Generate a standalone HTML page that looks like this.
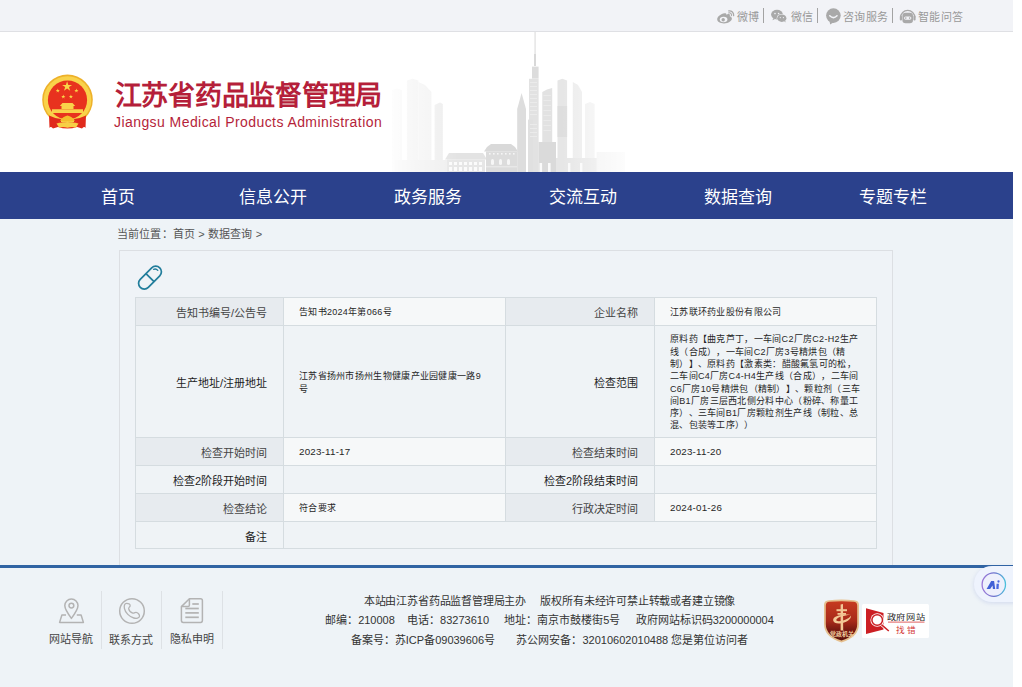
<!DOCTYPE html>
<html lang="zh-CN"><head><meta charset="utf-8">
<style>
html,body{margin:0;padding:0;background:#fff;}
body{text-spacing-trim:space-all;width:1022px;height:687px;overflow:hidden;position:relative;font-family:"Liberation Sans",sans-serif;color:#333;}
.abs{position:absolute;}
#page{position:absolute;left:0;top:0;width:1013px;height:687px;background:#eef3f7;overflow:hidden;}
#topbar{position:absolute;left:0;top:0;width:1013px;height:31px;background:#f2f3f7;border-bottom:1px solid #dfe0e4;}
#topbar .t{position:absolute;top:9px;font-size:11px;letter-spacing:0.45px;line-height:16px;color:#999;white-space:nowrap;}
#topbar .sep{position:absolute;top:8px;width:1px;height:15px;background:#a3a3a3;}
#header{position:absolute;left:0;top:32px;width:1013px;height:140px;background:#fff;}
#nav{position:absolute;left:0;top:172px;width:1013px;height:47px;background:#2b418c;}
#nav .i{position:absolute;top:2px;width:155px;text-align:center;font-size:17px;font-weight:500;line-height:47px;color:#fff;white-space:nowrap;}
#crumb{position:absolute;left:117px;top:226px;font-size:11px;letter-spacing:0.15px;line-height:16px;color:#555;white-space:nowrap;}
#box{position:absolute;left:119px;top:250px;width:772px;height:315px;border:1px solid #dcdfe3;border-bottom:none;background:#eff3f7;}
table{position:absolute;left:135px;top:297px;border-collapse:collapse;table-layout:fixed;}
td{border:1px solid #d5dce0;padding:0;font-size:11px;color:#333;}
td.v{color:#262626;}
td.l{text-align:right;padding-right:16px;padding-top:1px;}
td.v{padding-left:15px;padding-top:2px;font-size:9px;letter-spacing:0.3px;line-height:12.33px;}
td.d{font-size:9.8px;letter-spacing:0.2px;}
tr.o td.l{background:#e7ebef;color:#444;}
tr.e td.l{color:#1c1c1c;}
tr.o td.v{background:#f6f8f9;}
tr.e td{background:#eff3f6;}
#fline{position:absolute;left:0;top:565px;width:1013px;height:3px;background:#3064a3;}
.fi{position:absolute;top:632px;font-size:11px;line-height:14px;color:#444;white-space:nowrap;}
.fsep{position:absolute;top:591px;width:1px;height:58px;background:#dde1e5;}
.ft{position:absolute;left:0;width:1099px;text-align:center;font-size:11px;line-height:16px;color:#333;white-space:nowrap;}
</style></head>
<body>
<div id="page">
  <div id="topbar">
    <svg class="abs" style="left:700px;top:0" width="230" height="31" viewBox="700 0 230 31">
      <g fill="#a9a9a9">
        <!-- weibo -->
        <path d="M724.5,13.2 C721,13.6 717.2,16.6 717.2,19.3 C717.2,21.9 720.3,23.4 724,23.4 C728.6,23.4 731.9,21 731.9,18.6 C731.9,17.2 730.6,16.5 729.7,16.3 C730.2,15.2 730.1,14.2 728.9,14 C728,13.9 726.9,14.5 726.3,14.8 C726.6,13.6 726.1,13 724.5,13.2 Z"/>
        <ellipse cx="723.6" cy="19.5" rx="3.8" ry="2.7" fill="#f2f3f7"/>
        <circle cx="723.2" cy="19.7" r="1.7"/>
        <path d="M728.8,10.9 A4.2,4.2 0 0 1 733.6,15.6" stroke="#a9a9a9" stroke-width="1.4" fill="none" stroke-linecap="round"/>
        <path d="M728.6,12.9 A2.2,2.2 0 0 1 731.4,15.6" stroke="#a9a9a9" stroke-width="1.1" fill="none" stroke-linecap="round"/>
        <!-- wechat -->
        <ellipse cx="777" cy="14.6" rx="5.9" ry="4.8"/>
        <path d="M773.5,18 L772.4,20.2 L775.6,18.8 Z"/>
        <ellipse cx="781.8" cy="18.2" rx="5.1" ry="4.1" fill="#f2f3f7"/>
        <ellipse cx="781.8" cy="18.2" rx="4.6" ry="3.7"/>
        <path d="M784,21 L785.6,22.6 L785.2,20.4 Z"/>
        <circle cx="775" cy="13.6" r="0.8" fill="#f2f3f7"/><circle cx="778.6" cy="13.6" r="0.8" fill="#f2f3f7"/>
        <circle cx="780.3" cy="17.6" r="0.6" fill="#f2f3f7"/><circle cx="783.4" cy="17.6" r="0.6" fill="#f2f3f7"/>
        <!-- consult -->
        <circle cx="833.4" cy="15.6" r="7.3"/>
        <path d="M829.5,21 L830.2,24.5 L834,22 Z"/>
        <path d="M829.8,15.8 Q833.4,19.4 837,15.8" stroke="#f2f3f7" stroke-width="1.6" fill="none" stroke-linecap="round"/>
        <!-- robot -->
        <path d="M900.6,17.5 A7.1,7.1 0 0 1 914.8,17.5" stroke="#a9a9a9" stroke-width="1.3" fill="none"/>
        <rect x="899.8" y="15.8" width="2.2" height="4.6" rx="1"/>
        <rect x="913.4" y="15.8" width="2.2" height="4.6" rx="1"/>
        <rect x="902.4" y="12.8" width="10.6" height="10.4" rx="3.2"/>
        <rect x="904" y="16.4" width="7.4" height="3.4" rx="1.7" fill="#f2f3f7"/>
        <circle cx="905.8" cy="18.1" r="0.8"/><circle cx="909.6" cy="18.1" r="0.8"/>
      </g>
    </svg>
    <div class="t" style="left:737px">微博</div>
    <div class="sep" style="left:763px"></div>
    <div class="t" style="left:791px">微信</div>
    <div class="sep" style="left:817px"></div>
    <div class="t" style="left:843px">咨询服务</div>
    <div class="sep" style="left:892px"></div>
    <div class="t" style="left:918px">智能问答</div>
  </div>
  <div id="header">
    <svg class="abs" style="left:0;top:0" width="1013" height="140" viewBox="0 32 1013 140">
      <defs>
        <linearGradient id="skyfade" x1="0" x2="1" y1="0" y2="0">
          <stop offset="0" stop-color="#fff" stop-opacity="1"/>
          <stop offset="0.12" stop-color="#fff" stop-opacity="0.55"/>
          <stop offset="0.3" stop-color="#fff" stop-opacity="0"/>
          <stop offset="0.7" stop-color="#fff" stop-opacity="0"/>
          <stop offset="0.88" stop-color="#fff" stop-opacity="0.55"/>
          <stop offset="1" stop-color="#fff" stop-opacity="1"/>
        </linearGradient>
        <linearGradient id="skyv" x1="0" x2="0" y1="0" y2="1">
          <stop offset="0" stop-color="#f2f2f2"/>
          <stop offset="1" stop-color="#dcdcdc"/>
        </linearGradient>
      </defs>
      <!-- emblem -->
      <g>
        <circle cx="67.5" cy="99.8" r="25.3" fill="#eeb12a"/>
        <circle cx="67.5" cy="100" r="23.8" fill="#f9d24a"/>
        <circle cx="67.5" cy="100" r="19.6" fill="#e8321e"/>
        <polygon fill="#f9d548" points="67.1,81.3 68.3,84.9 72.1,84.9 69.0,87.1 70.2,90.7 67.1,88.5 64.0,90.7 65.2,87.1 62.1,84.9 65.9,84.9"/>
        <polygon fill="#f9d548" points="57.8,88.5 58.3,90.0 59.9,90.0 58.6,90.9 59.1,92.4 57.8,91.5 56.5,92.4 57.0,90.9 55.7,90.0 57.3,90.0"/>
        <polygon fill="#f9d548" points="76.4,88.5 76.9,90.0 78.5,90.0 77.2,90.9 77.7,92.4 76.4,91.5 75.1,92.4 75.6,90.9 74.3,90.0 75.9,90.0"/>
        <polygon fill="#f9d548" points="63.3,94.5 63.8,96.0 65.4,96.0 64.1,96.9 64.6,98.4 63.3,97.5 62.0,98.4 62.5,96.9 61.2,96.0 62.8,96.0"/>
        <polygon fill="#f9d548" points="70.9,94.5 71.4,96.0 73.0,96.0 71.7,96.9 72.2,98.4 70.9,97.5 69.6,98.4 70.1,96.9 68.8,96.0 70.4,96.0"/>
        <path fill="#f9d24a" d="M59.8,106 L62.5,103 L72.5,103 L75.2,106 Z M61.5,106 h12 v3 h-12 Z M52,109.3 h31 v3.8 h-31 Z"/>
        <path fill="#e02a1c" d="M49,115.5 Q55,118.5 61,119 L61,126 Q57,127 53,128.5 Q50.5,126 49.5,128 Z"/>
        <path fill="#e02a1c" d="M86,115.5 Q80,118.5 74,119 L74,126 Q78,127 82,128.5 Q84.5,126 85.5,128 Z"/>
        <path fill="#e8321e" d="M58,121 Q67.5,125 77,121 L77,127 Q67.5,130 58,127 Z"/>
        <path fill="#f3bd2c" d="M60,120.5 Q63,116.5 67.5,115.5 Q72,116.5 75,120.5 Q71,122 67.5,121.3 Q64,122 60,120.5 Z"/>
        <path fill="#f7cf45" d="M56.5,123.5 Q62,122 67.5,123 Q73,122 78.5,123.5 L76,127.6 Q71.5,126.5 67.5,127.8 Q63.5,126.5 59,127.6 Z"/>
        </g>
      <!-- skyline -->
      <g>
        <polygon points="392,172 392,90 397,88.5 402,90 402,172" fill="#f3f3f3"/>
        <polygon points="406.9,172 406.9,80.5 412.6,78.8 418.3,80.5 418.3,172" fill="#efefef"/>
        <polygon points="418.3,172 418.3,82 425,85 431.4,92 431.4,172" fill="#f1f1f1"/>
        <polygon points="434.6,172 434.6,105 440,102.4 442.8,104 442.8,172" fill="#ededed"/>
        <rect x="395" y="160" width="52" height="12" fill="#eeeeee"/>
        <!-- low building -->
        <polygon points="445,159.5 449,153 483,153 487,159.5" fill="#e3e3e3"/>
        <rect x="447" y="159.5" width="38" height="12.5" fill="#e6e6e6"/>
        <g fill="#fbfbfb">
          <rect x="449" y="162" width="3" height="3"/><rect x="454" y="162" width="3" height="3"/><rect x="459" y="162" width="3" height="3"/><rect x="464" y="162" width="3" height="3"/><rect x="469" y="162" width="3" height="3"/><rect x="474" y="162" width="3" height="3"/><rect x="479" y="162" width="3" height="3"/>
          <rect x="449" y="167" width="3" height="4"/><rect x="454" y="167" width="3" height="4"/><rect x="459" y="167" width="3" height="4"/><rect x="464" y="167" width="3" height="4"/><rect x="469" y="167" width="3" height="4"/><rect x="474" y="167" width="3" height="4"/><rect x="479" y="167" width="3" height="4"/>
        </g>
        <!-- gate -->
        <polygon points="484,151.4 487,147 491,144 511,144 515,147 518,151.4" fill="#d9d9d9"/>
        <rect x="486" y="151.4" width="31" height="20.6" fill="#dcdcdc"/>
        <g fill="#f6f6f6">
          <rect x="489" y="153" width="1.6" height="1.6"/><rect x="493" y="153" width="1.6" height="1.6"/><rect x="497" y="153" width="1.6" height="1.6"/><rect x="501" y="153" width="1.6" height="1.6"/><rect x="505" y="153" width="1.6" height="1.6"/><rect x="509" y="153" width="1.6" height="1.6"/><rect x="513" y="153" width="1.6" height="1.6"/>
          <rect x="491" y="159" width="3" height="6" rx="1.5"/><rect x="499" y="159" width="3" height="6" rx="1.5"/><rect x="507" y="159" width="3" height="6" rx="1.5"/>
        </g>
        <rect x="486" y="166" width="31" height="1.4" fill="#e8e8e8"/>
        <!-- spire -->
        <polygon points="517.2,172 517.2,109 521.6,93 526,109 526,172" fill="#dddddd"/>
        <!-- zifeng tower -->
        <rect x="534.6" y="32" width="0.9" height="24" fill="#d4d4d4"/>
        <rect x="534" y="54" width="2" height="12" fill="#d8d8d8"/>
        <rect x="532" y="66.6" width="6.6" height="12" fill="#dcdcdc"/>
        <rect x="529" y="78.8" width="9.6" height="93.2" fill="#e2e2e2"/>
        <rect x="528" y="119.6" width="5" height="52.4" fill="#e0e0e0"/>
        <g fill="#f2f2f2"><rect x="530" y="82" width="7" height="0.6"/><rect x="530" y="86" width="7" height="0.6"/><rect x="530" y="90" width="7" height="0.6"/><rect x="530" y="94" width="7" height="0.6"/><rect x="530" y="98" width="7" height="0.6"/><rect x="530" y="102" width="7" height="0.6"/><rect x="530" y="106" width="7" height="0.6"/><rect x="530" y="110" width="7" height="0.6"/><rect x="530" y="114" width="7" height="0.6"/><rect x="530" y="124" width="7" height="0.6"/><rect x="530" y="128" width="7" height="0.6"/><rect x="530" y="132" width="7" height="0.6"/><rect x="530" y="136" width="7" height="0.6"/></g>
        <!-- towers right -->
        <polygon points="542.3,172 542.3,92 547,89.5 552.2,88 552.2,172" fill="#e2e2e2"/>
        <g fill="#f0f0f0"><rect x="543.5" y="95" width="7.5" height="0.6"/><rect x="543.5" y="100" width="7.5" height="0.6"/><rect x="543.5" y="105" width="7.5" height="0.6"/><rect x="543.5" y="110" width="7.5" height="0.6"/><rect x="543.5" y="115" width="7.5" height="0.6"/><rect x="543.5" y="120" width="7.5" height="0.6"/><rect x="543.5" y="125" width="7.5" height="0.6"/><rect x="543.5" y="130" width="7.5" height="0.6"/></g>
        <rect x="538.6" y="142" width="17.4" height="30" fill="#dadada"/>
        <polygon points="557.5,172 557.5,80.5 562.3,78.8 567.1,80.5 567.1,172" fill="#e6e6e6"/>
        <rect x="557.5" y="106" width="9.6" height="31" fill="#dedede"/>
        <polygon points="572.8,172 572.8,82 578,85 582,92 582,172" fill="#ececec"/>
        <polygon points="585,172 585,104 590,102 594.6,104 594.6,172" fill="#f0f0f0"/>
        <rect x="556" y="158" width="45" height="14" fill="#e6e6e6"/>
        <rect x="596.6" y="152" width="28.4" height="20" fill="#f2f2f2"/>
        <g fill="#fafafa"><rect x="539.5" y="163" width="2.6" height="9"/><rect x="548" y="163" width="2.6" height="9"/><rect x="568" y="163" width="2.4" height="9"/><rect x="580" y="163" width="2.4" height="9"/></g>
      </g>
      <rect x="380" y="32" width="260" height="140" fill="url(#skyfade)"/>
    </svg>
    <div class="abs" style="left:114.5px;top:48px;font-size:27px;letter-spacing:-0.25px;line-height:32px;font-weight:bold;color:#b51f3a;white-space:nowrap;">江苏省药品监督管理局</div>
    <div class="abs" style="left:114px;top:81px;font-size:14px;letter-spacing:0.43px;line-height:18px;color:#b51f3a;white-space:nowrap;">Jiangsu Medical Products Administration</div>
  </div>
  <div id="nav">
    <div class="i" style="left:40px">首页</div>
    <div class="i" style="left:195px">信息公开</div>
    <div class="i" style="left:350px">政务服务</div>
    <div class="i" style="left:505px">交流互动</div>
    <div class="i" style="left:660px">数据查询</div>
    <div class="i" style="left:815px">专题专栏</div>
  </div>
  <div id="crumb">当前位置：首页 &gt; 数据查询 &gt;</div>
  <div id="box"></div>
  <svg class="abs" style="left:130px;top:258px" width="40" height="40" viewBox="130 258 40 40">
    <g transform="translate(150,277.6) rotate(-45)" fill="none" stroke="#217d9b" stroke-width="1.7">
      <rect x="-13.8" y="-5.7" width="27.6" height="11.4" rx="5.7"/>
      <line x1="0" y1="-5.7" x2="0" y2="5.7"/>
      <path d="M8.4,-3.3 A3.6,3.6 0 0 1 10.6,0.4" stroke-width="1.3" stroke-linecap="round"/>
    </g>
  </svg>
  <table>
    <colgroup><col style="width:148px"><col style="width:222px"><col style="width:149px"><col style="width:222px"></colgroup>
    <tr class="o" style="height:28px"><td class="l">告知书编号/公告号</td><td class="v">告知书2024年第066号</td><td class="l">企业名称</td><td class="v">江苏联环药业股份有限公司</td></tr>
    <tr class="e" style="height:112px"><td class="l">生产地址/注册地址</td><td class="v">江苏省扬州市扬州生物健康产业园健康一路9<br>号</td><td class="l">检查范围</td><td class="v">原料药【曲克芦丁，一车间C2厂房C2-H2生产<br>线（合成），一车间C2厂房3号精烘包（精<br>制）】、原料药【激素类：醋酸氟氢可的松，<br>二车间C4厂房C4-H4生产线（合成），二车间<br>C6厂房10号精烘包（精制）】、颗粒剂（三车<br>间B1厂房三层西北侧分料中心（粉碎、称量工<br>序）、三车间B1厂房颗粒剂生产线（制粒、总<br>混、包装等工序））</td></tr>
    <tr class="o" style="height:28px"><td class="l">检查开始时间</td><td class="v d">2023-11-17</td><td class="l">检查结束时间</td><td class="v d">2023-11-20</td></tr>
    <tr class="e" style="height:28px"><td class="l">检查2阶段开始时间</td><td class="v"></td><td class="l">检查2阶段结束时间</td><td class="v"></td></tr>
    <tr class="o" style="height:28px"><td class="l">检查结论</td><td class="v">符合要求</td><td class="l">行政决定时间</td><td class="v d">2024-01-26</td></tr>
    <tr class="e" style="height:27px"><td class="l">备注</td><td class="v" colspan="3"></td></tr>
  </table>
  <div id="fline"></div>
  <div class="fsep" style="left:101px"></div>
  <div class="fsep" style="left:161px"></div>
  <div class="fsep" style="left:222px"></div>
  <svg class="abs" style="left:40px;top:590px" width="190" height="40" viewBox="40 590 190 40">
    <g fill="none" stroke="#b3b3b3" stroke-width="1.5" stroke-linejoin="round">
      <!-- pin -->
      <path d="M71.4,618.4 C67.5,613.2 64.8,609.2 64.8,605.6 A6.6,6.6 0 0 1 78,605.6 C78,609.2 75.3,613.2 71.4,618.4 Z"/>
      <circle cx="71.4" cy="605.6" r="2.4"/>
      <path d="M66,615 L61.9,615 L59.6,622.4 L83.4,622.4 L81.1,615 L76.8,615"/>
      <!-- phone -->
      <circle cx="132" cy="611" r="12.3"/>
      <path d="M126.6,603.3 C124.6,603.3 123.9,605.6 124.4,608.3 C125.2,612.6 129.6,617 133.8,618 C136.4,618.6 139.3,618.3 139.5,616.3 C139.7,614.5 137.8,612.6 136,612.4 C134.6,612.3 133.8,613.4 132.8,613.1 C131,612.5 129.1,610.4 128.7,608.8 C128.4,607.6 129.7,607.2 130.1,606 C130.6,604.4 128.7,603.3 126.6,603.3 Z" stroke-width="1.3"/>
      <!-- doc -->
      <path d="M189.4,598.8 L200.6,598.8 Q202.4,598.8 202.4,600.6 L202.4,620.6 Q202.4,622.4 200.6,622.4 L183.2,622.4 Q181.4,622.4 181.4,620.6 L181.4,606.6 Z"/>
      <path d="M181.4,606.6 L187.8,606.6 Q189.4,606.6 189.4,605 L189.4,598.8"/>
      <line x1="192.3" y1="604" x2="198.8" y2="604" stroke-width="1.7"/>
      <line x1="185.3" y1="608.5" x2="198.8" y2="608.5" stroke-width="1.7"/>
      <line x1="185.3" y1="612.9" x2="198.8" y2="612.9" stroke-width="1.7"/>
      <line x1="185.3" y1="617.3" x2="198.8" y2="617.3" stroke-width="1.7"/>
    </g>
  </svg>
  <div class="fi" style="left:49px">网站导航</div>
  <div class="fi" style="left:109px;top:633px">联系方式</div>
  <div class="fi" style="left:170px">隐私申明</div>
  <svg class="abs" style="left:815px;top:590px" width="120" height="60" viewBox="815 590 120 60">
    <defs>
      <linearGradient id="shg" x1="0" x2="0" y1="0" y2="1">
        <stop offset="0" stop-color="#c63a20"/>
        <stop offset="0.5" stop-color="#a82a1a"/>
        <stop offset="0.72" stop-color="#7a1a12"/>
        <stop offset="1" stop-color="#5a120c"/>
      </linearGradient>
    </defs>
    <path d="M824,605 Q824,600.5 829,600.2 Q841.5,599 854,600.2 Q859,600.5 859,605 L859,624 Q859,637 841.5,642.5 Q824,637 824,624 Z" fill="#e6c08f"/>
    <path d="M825.8,605.5 Q825.8,602 829.5,601.8 Q841.5,600.8 853.5,601.8 Q857.2,602 857.2,605.5 L857.2,624 Q857.2,635.6 841.5,640.6 Q825.8,635.6 825.8,624 Z" fill="url(#shg)"/>
    <g fill="#f2c896">
      <path d="M840.6,604.5 L843,604 L843.2,630.5 L840.6,630.5 Z"/>
      <rect x="836.5" y="609.2" width="10.5" height="2"/>
      <rect x="837.5" y="613" width="8.5" height="1.8"/>
      <path d="M833.2,620.5 C832.5,616.5 840,613.8 850.8,614.6 C846.5,615.4 838,616.6 836.4,619.6 C835.6,621.4 839,621.8 843,620.6 C847,619.4 850.5,617 851,615.5 C851.6,619 846,623.2 839.5,623.4 C835.6,623.5 833.6,622.4 833.2,620.5 Z"/>
    </g>
    <text x="841.5" y="636" font-size="5.9" font-weight="bold" fill="#f6d2a2" text-anchor="middle" font-family="Liberation Sans, sans-serif">党政机关</text>
    <rect x="862" y="604" width="67" height="34" rx="1.5" fill="#ffffff"/>
    <polygon points="866,608.2 883.5,613 883.5,629.5 866,634" fill="#cc1f24"/>
    <circle cx="877.2" cy="620" r="6.8" fill="#fff"/>
    <circle cx="877.2" cy="620" r="5.3" fill="#fff" stroke="#cc1f24" stroke-width="1.5"/>
    <line x1="881.4" y1="624.6" x2="888.8" y2="631" stroke="#fff" stroke-width="3"/>
    <line x1="881.4" y1="624.6" x2="888.8" y2="631" stroke="#cc1f24" stroke-width="1.5"/>
    <g transform="translate(906.3,619.6) scale(1,0.85)"><text x="0" y="0" font-size="9.2" letter-spacing="0.2" fill="#2a2a2a" text-anchor="middle" font-family="Liberation Sans, sans-serif">政府网站</text></g>
    <rect x="888" y="621.6" width="36.5" height="1" fill="#e06060"/>
    <g transform="translate(907.3,632.6) scale(1,0.9)"><text x="0" y="0" font-size="8.6" fill="#d43838" text-anchor="middle" letter-spacing="2.6" font-family="Liberation Sans, sans-serif">找错</text></g>
  </svg>
  <div class="abs" style="left:974px;top:566px;width:60px;height:36px;border-radius:18px;background:#eef3fd;box-shadow:0 1px 4px rgba(80,100,200,0.18);"></div>
  <svg class="abs" style="left:976px;top:568px" width="36" height="34" viewBox="976 568 36 34">
    <defs>
      <linearGradient id="aig" x1="0" x2="1" y1="0" y2="0">
        <stop offset="0" stop-color="#9d78d8"/>
        <stop offset="0.55" stop-color="#6a72cc"/>
        <stop offset="1" stop-color="#4cc0dc"/>
      </linearGradient>
    </defs>
    <circle cx="993.8" cy="584.6" r="11.7" fill="#eef0fc" stroke="url(#aig)" stroke-width="1.3"/>
    <path fill="#4262d6" fill-rule="evenodd" d="M986.6,588.9 L991.2,581.1 L994.1,581.1 L995.2,588.9 Z M990.2,588.9 L992.5,585.6 L992.9,588.9 Z"/>
    <path fill="#4a6ae0" d="M996.6,583.7 L998.9,583.7 L998.6,588.9 L996.3,588.9 Z"/>
    <circle cx="998.5" cy="581.5" r="1.15" fill="#4a6ae0"/>
  </svg>
  <div class="ft" style="top:593px;letter-spacing:-0.18px">本站由江苏省药品监督管理局主办&nbsp;&nbsp;&nbsp;&nbsp;&nbsp;版权所有未经许可禁止转载或者建立镜像</div>
  <div class="ft" style="top:612px">邮编：210008&nbsp;&nbsp;&nbsp;&nbsp;电话：83273610&nbsp;&nbsp;&nbsp;&nbsp;&nbsp;地址：南京市鼓楼街5号&nbsp;&nbsp;&nbsp;&nbsp;&nbsp;政府网站标识码3200000004</div>
  <div class="ft" style="top:632px">备案号：苏ICP备09039606号&nbsp;&nbsp;&nbsp;&nbsp;&nbsp;&nbsp;&nbsp;苏公网安备：32010602010488 您是第位访问者</div>
</div>
</body></html>
